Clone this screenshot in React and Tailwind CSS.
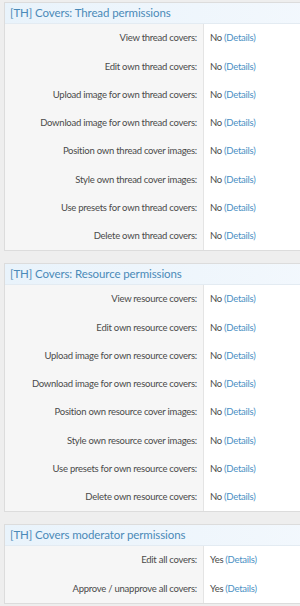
const SECTIONS = [
  {
    title: "[TH] Covers: Thread permissions",
    rows: [
      ["View thread covers:", "No"],
      ["Edit own thread covers:", "No"],
      ["Upload image for own thread covers:", "No"],
      ["Download image for own thread covers:", "No"],
      ["Position own thread cover images:", "No"],
      ["Style own thread cover images:", "No"],
      ["Use presets for own thread covers:", "No"],
      ["Delete own thread covers:", "No"],
    ],
  },
  {
    title: "[TH] Covers: Resource permissions",
    rows: [
      ["View resource covers:", "No"],
      ["Edit own resource covers:", "No"],
      ["Upload image for own resource covers:", "No"],
      ["Download image for own resource covers:", "No"],
      ["Position own resource cover images:", "No"],
      ["Style own resource cover images:", "No"],
      ["Use presets for own resource covers:", "No"],
      ["Delete own resource covers:", "No"],
    ],
  },
  {
    title: "[TH] Covers moderator permissions",
    rows: [
      ["Edit all covers:", "Yes"],
      ["Approve / unapprove all covers:", "Yes"],
    ],
  },
];

export default function App() {
  return (
    <div className="w-[300px] h-[606px] overflow-hidden bg-[#eeeeee] pt-[2px] pl-[4px] font-['Lato',sans-serif]">
      <div className="flex flex-col gap-[12px]">
        {SECTIONS.map((s) => (
          <div key={s.title} className="w-[320px] border border-[#dcdcdc] bg-white">
            <div className="h-[21px] flex items-center pl-[5px] bg-gradient-to-r from-[#e9f3fb] to-[#f3f8fd] border-b border-[#e3ebf2] text-[11.5px] tracking-[-0.1px] text-[#4a8ab8] leading-none">
              {s.title}
            </div>
            {s.rows.map(([label, val]) => (
              <div key={label} className="flex h-[28.25px] text-[9.5px] tracking-[-0.25px] leading-none">
                <div className="w-[199px] shrink-0 bg-[#f6f6f6] border-r border-[#e4e4e4] flex items-center justify-end pr-[6px] text-[#4a4a4a] whitespace-nowrap">
                  {label}
                </div>
                <div className="flex-1 flex items-center pl-[6px] text-[#4a4a4a] whitespace-nowrap">
                  {val}<span className="ml-[2px] text-[#4a90c4]">(Details)</span>
                </div>
              </div>
            ))}
          </div>
        ))}
      </div>
    </div>
  );
}
